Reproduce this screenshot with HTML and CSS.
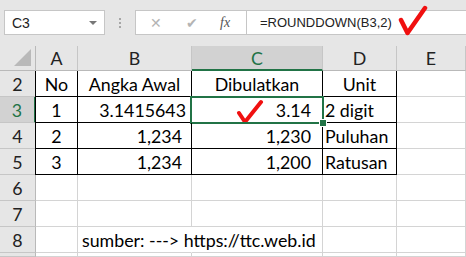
FILE: index.html
```html
<!DOCTYPE html>
<html lang="id">
<head>
    <meta charset="UTF-8">
    <title>ROUNDDOWN</title>
    <link rel="stylesheet" href="styles.css">
</head>
<body>
    <div class="toolbar">
        <div class="namebox">C3 <span class="drop"></span></div>
        <div class="grip"><i></i><i></i><i></i></div>
        <div class="fxbox">
            <span class="ico x">&#x2715;</span>
            <span class="ico ok">&#x2714;</span>
            <span class="fx">fx</span>
        </div>
        <div class="formula">
            =ROUNDDOWN(B3,2)
            <svg class="check big" width="30" height="32" viewBox="0 0 30 32">
                <path d="M3 15 L9.5 28 L27 3" fill="none" stroke="#f01010" stroke-width="4.5" stroke-linecap="round" stroke-linejoin="round"/>
            </svg>
        </div>
    </div>

    <div class="sheet">
        <div class="corner"><span></span></div>
        <div class="colhead">A</div>
        <div class="colhead">B</div>
        <div class="colhead active">C</div>
        <div class="colhead">D</div>
        <div class="colhead">E</div>

        <div class="rowhead">2</div>
        <div class="cell b bl center">No</div>
        <div class="cell b center">Angka Awal</div>
        <div class="cell b center">Dibulatkan</div>
        <div class="cell b center">Unit</div>
        <div class="cell"></div>

        <div class="rowhead active">3</div>
        <div class="cell b bl center">1</div>
        <div class="cell b right p5">3.1415643</div>
        <div class="cell b right p11 selected">
            <svg class="check small" width="28" height="26" viewBox="0 0 28 26">
                <path d="M3 15 L9 24 L25 4" fill="none" stroke="#f01010" stroke-width="4" stroke-linecap="round" stroke-linejoin="round"/>
            </svg>
            3.14
            <span class="handle"></span>
        </div>
        <div class="cell b">2 digit</div>
        <div class="cell"></div>

        <div class="rowhead">4</div>
        <div class="cell b bl center">2</div>
        <div class="cell b right p9">1,234</div>
        <div class="cell b right p11">1,230</div>
        <div class="cell b">Puluhan</div>
        <div class="cell"></div>

        <div class="rowhead">5</div>
        <div class="cell b bl center">3</div>
        <div class="cell b right p9">1,234</div>
        <div class="cell b right p11">1,200</div>
        <div class="cell b">Ratusan</div>
        <div class="cell"></div>

        <div class="rowhead">6</div>
        <div class="cell"></div><div class="cell"></div><div class="cell"></div><div class="cell"></div><div class="cell"></div>

        <div class="rowhead">7</div>
        <div class="cell"></div><div class="cell"></div><div class="cell"></div><div class="cell"></div><div class="cell"></div>

        <div class="rowhead">8</div>
        <div class="cell"></div>
        <div class="cell spill">sumber: ---&gt; https://ttc.web.id</div>
        <div class="cell"></div><div class="cell"></div><div class="cell"></div>

        <div class="rowhead"></div>
        <div class="cell"></div><div class="cell"></div><div class="cell"></div><div class="cell"></div><div class="cell"></div>
    </div>
</body>
</html>
```

FILE: styles.css
```css
body { margin: 0; width: 466px; height: 257px; overflow: hidden; background: #fff; font-family: "Liberation Sans", Arial, sans-serif; color: #000; }

.toolbar { height: 46px; background: #e6e6e6; display: flex; align-items: flex-start; padding-top: 10px; box-sizing: border-box; }
.namebox { margin-left: 4px; width: 101px; height: 25px; box-sizing: border-box; background: #fff; border: 1px solid #c6c6c6; font-size: 14px; color: #222; padding: 4px 0 0 7px; position: relative; }
.drop { position: absolute; right: 7px; top: 10px; border-left: 4px solid transparent; border-right: 4px solid transparent; border-top: 4px solid #777; }
.grip { width: 30px; display: flex; flex-direction: column; align-items: center; gap: 2px; padding-top: 8px; }
.grip i { width: 2px; height: 2px; background: #a6a6a6; }
.fxbox { width: 112px; height: 25px; box-sizing: border-box; background: #fff; border: 1px solid #c6c6c6; display: flex; align-items: center; padding-left: 14px; }
.ico { color: #b4b4b4; font-size: 14px; width: 36px; }
.fx { font-family: "Liberation Serif", serif; font-style: italic; font-size: 14px; color: #555; margin-left: -2px; }
.formula { flex: 1; height: 25px; box-sizing: border-box; background: #fff; border: 1px solid #c6c6c6; border-left: none; border-right: none; font-size: 13px; color: #222; padding: 4px 0 0 13px; position: relative; }
.check { position: absolute; }
.check.big { left: 151px; top: -6px; }

.sheet { display: grid; grid-template-columns: 36px 42px 114px 131px 74px 69px; grid-template-rows: 25px repeat(7, 26px) 4px; font-family: Lato, "Liberation Sans", sans-serif; font-size: 17.8px; }
.corner, .colhead, .rowhead, .cell { box-sizing: border-box; border-right: 1px solid #d4d4d4; border-bottom: 1px solid #d4d4d4; }
.corner { background: #e6e6e6; border-color: #b9b9b9; position: relative; }
.corner span { position: absolute; right: 4px; bottom: 4px; border-left: 17px solid transparent; border-bottom: 17px solid #b9b9b9; }
.colhead { background: #e6e6e6; border-right-color: #c6c6c6; border-bottom-color: #b9b9b9; text-align: center; line-height: 25px; color: #222; }
.rowhead { background: #e6e6e6; border-right-color: #b9b9b9; border-bottom-color: #c6c6c6; text-align: center; line-height: 27px; color: #222; }
.colhead.active { background: #d2d2d2; color: #217346; border-bottom: 2px solid #217346; }
.rowhead.active { background: #d2d2d2; color: #217346; border-right: 2px solid #217346; }

.cell { line-height: 27px; padding: 0 2px; white-space: nowrap; position: relative; }
.b { border-right-color: #000; border-bottom-color: #000; }
.bl { box-shadow: -1px 0 0 #000; }
.center { text-align: center; }
.right { text-align: right; }
.p5 { padding-right: 5px; }
.p9 { padding-right: 9px; }
.p11 { padding-right: 11px; }
.spill { overflow: visible; border-right-color: transparent; padding-left: 4px; }

.selected::after { content: ""; position: absolute; left: -2px; top: -1px; right: -2px; bottom: -2px; border: 2px solid #217346; }
.check.small { left: 44px; top: 1px; }
.handle { position: absolute; right: -5px; bottom: -5px; width: 6px; height: 6px; background: #217346; border: 1px solid #fff; z-index: 2; }
```
